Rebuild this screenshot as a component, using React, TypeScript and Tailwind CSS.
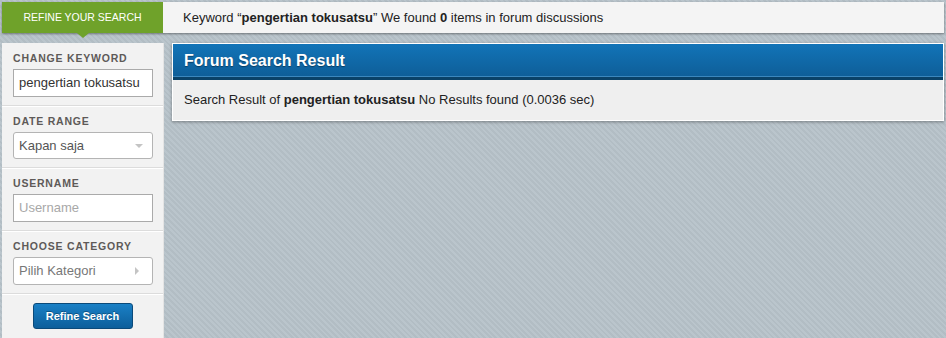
import React from "react";

const Label = ({ children }: { children: React.ReactNode }) => (
  <div className="h-[13px] text-[10.5px] leading-[13px] font-bold tracking-[0.8px] text-[#5e5a58] mb-[4px]">
    {children}
  </div>
);

const Section = ({ children }: { children: React.ReactNode }) => (
  <div className="pt-[9px] pb-[8px] px-[11px] border-b border-[#dcdcdc] shadow-[0_1px_0_#ffffff]">
    {children}
  </div>
);

export default function App() {
  return (
    <div
      className="w-full h-[338px] overflow-hidden p-[2px] bg-[repeating-linear-gradient(45deg,#bac5cc_0px,#bac5cc_2px,#b2bdc4_2px,#b2bdc4_4px)]"
      style={{ fontFamily: '"Liberation Sans", Arial, sans-serif' }}
    >
      {/* TOP BAR */}
      <div className="flex h-[31px] bg-[#f4f4f4] shadow-[0_1px_2px_rgba(0,0,0,0.4)]">
        <div className="relative w-[161px] shrink-0 bg-[#6fa22a] flex items-center justify-center text-white text-[10.5px]">
          REFINE YOUR SEARCH
          <div className="absolute left-[75px] -bottom-[5px] w-0 h-0 border-l-[6px] border-r-[6px] border-t-[5px] border-l-transparent border-r-transparent border-t-[#6fa22a]" />
        </div>
        <div className="flex items-center pl-[20px] text-[13px] text-[#222]">
          Keyword “<b>pengertian tokusatsu</b>” We found&nbsp;<b>0</b>&nbsp;items in forum discussions
        </div>
      </div>

      {/* MAIN ROW */}
      <div className="flex gap-[8px] mt-[10px]">
        {/* SIDEBAR */}
        <div className="w-[162px] shrink-0 h-[300px] bg-[#f2f2f2] border-r border-[#e4e4e4]">
          <Section>
            <Label>CHANGE KEYWORD</Label>
            <div className="h-[28px] w-[140px] bg-white border border-[#aaaaaa] flex items-center px-[5px] text-[13px] text-[#333]">
              pengertian tokusatsu
            </div>
          </Section>
          <Section>
            <Label>DATE RANGE</Label>
            <div className="h-[27px] w-[140px] bg-white border border-[#b4b4b4] rounded-[3px] flex items-center justify-between px-[5px] text-[13px] text-[#555]">
              Kapan saja
              <span className="mr-[4px] w-0 h-0 border-l-[4px] border-r-[4px] border-t-[4px] border-l-transparent border-r-transparent border-t-[#c4c4c4]" />
            </div>
          </Section>
          <Section>
            <Label>USERNAME</Label>
            <div className="h-[28px] w-[140px] bg-white border border-[#aaaaaa] flex items-center px-[5px] text-[13px] text-[#a8a8a8]">
              Username
            </div>
          </Section>
          <Section>
            <Label>CHOOSE CATEGORY</Label>
            <div className="h-[28px] w-[140px] bg-white border border-[#b4b4b4] rounded-[3px] flex items-center justify-between px-[5px] text-[13px] text-[#777]">
              Pilih Kategori
              <span className="mr-[8px] w-0 h-0 border-t-[4px] border-b-[4px] border-l-[4px] border-t-transparent border-b-transparent border-l-[#c4c4c4]" />
            </div>
          </Section>
          <div className="flex justify-center pt-[9px]">
            <div className="w-[100px] h-[26px] rounded-[3px] border border-[#0b4a7a] bg-gradient-to-b from-[#1a80c6] to-[#0d5f9b] flex items-center justify-center text-white text-[11px] font-bold [text-shadow:0_-1px_0_rgba(0,0,0,0.3)]">
              Refine Search
            </div>
          </div>
        </div>

        {/* MAIN PANEL */}
        <div className="flex-1 h-[78px] border border-white shadow-[0_1px_3px_rgba(0,0,0,0.35)] bg-[#efefef]">
          <div className="h-[36px] bg-gradient-to-b from-[#1274b8] to-[#0e5e98] border-b-[3px] border-[#0a4268] shadow-[inset_0_-1px_0_#3b87bd] flex items-center pl-[11px]">
            <span className="text-white text-[16px] font-bold [text-shadow:0_1px_1px_rgba(0,0,0,0.4)]">
              Forum Search Result
            </span>
          </div>
          <div className="pl-[11px] pt-[10px] text-[13px] text-[#222]">
            Search Result of <b>pengertian tokusatsu</b> No Results found (0.0036 sec)
          </div>
        </div>
      </div>
    </div>
  );
}
